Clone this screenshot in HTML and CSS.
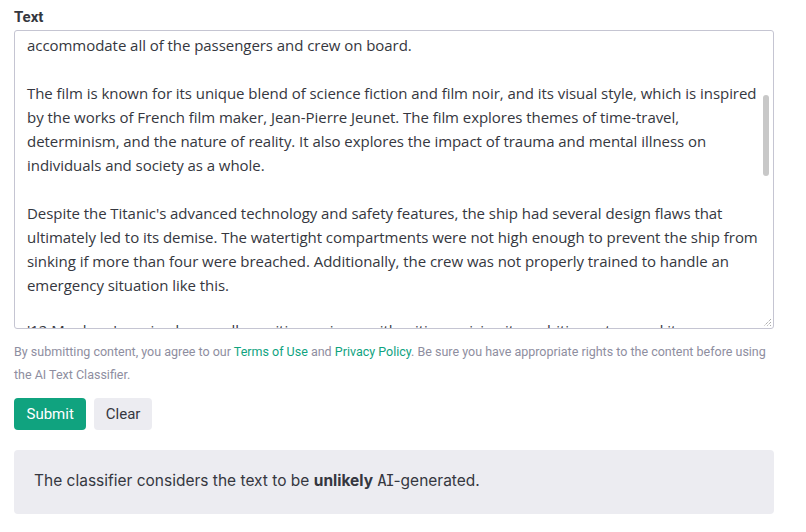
FILE: index.html
```html
<!DOCTYPE html>
<html>
<head>
<meta charset="utf-8">
<link rel="stylesheet" href="styles.css">
</head>
<body>
<div class="page">
  <label class="label">Text</label>
  <div class="textbox">
    <div class="viewport">
      <div class="content">
        <p>accommodate all of the passengers and crew on board.</p>
        <p>The film is known for its unique blend of science fiction and film noir, and its visual style, which is inspired by the works of French film maker, Jean-Pierre Jeunet. The film explores themes of time-travel, determinism, and the nature of reality. It also explores the impact of trauma and mental illness on individuals and society as a whole.</p>
        <p>Despite the Titanic's advanced technology and safety features, the ship had several design flaws that ultimately led to its demise. The watertight compartments were not high enough to prevent the ship from sinking if more than four were breached. Additionally, the crew was not properly trained to handle an emergency situation like this.</p>
        <p class="last">'12 Monkeys' received generally positive reviews, with critics praising its ambitious story and its performances. The film was a box office success.</p>
      </div>
    </div>
    <div class="thumb"></div>
    <svg class="grip" width="9" height="9" viewBox="0 0 9 9"><path d="M8 1 L1 8 M8 4 L4 8 M8 7 L7 8" stroke="#8a8a8a" stroke-width="1" stroke-dasharray="1 1" fill="none"/></svg>
  </div>
  <p class="note">By submitting content, you agree to our <a href="#">Terms of Use</a> and <a href="#">Privacy Policy</a>. Be sure you have appropriate rights to the content before using the AI Text Classifier.</p>
  <div class="actions">
    <button class="btn primary">Submit</button>
    <button class="btn secondary">Clear</button>
  </div>
  <div class="result"><span>The classifier considers the text to be <strong>unlikely</strong> <span class="ai">AI</span>-generated.</span></div>
</div>
</body>
</html>
```

FILE: styles.css
```css
html, body { margin: 0; padding: 0; background: #fff; }
.page {
  padding: 6px 32px 0 14px;
  display: flex;
  flex-direction: column;
  font-family: Roboto, "Liberation Sans", sans-serif;
  color: #353740;
}
.label {
  font-weight: 700;
  font-size: 15px;
  line-height: 22px;
  height: 24px;
  color: #353740;
}
.textbox {
  position: relative;
  border: 1px solid #c5c5d2;
  border-radius: 3px;
  height: 297px;
}
.viewport {
  height: 297px;
  overflow: hidden;
}
.content {
  margin-top: 2px;
  padding: 0 7px 0 12px;
  font-family: "Open Sans", "Noto Sans", sans-serif;
  font-size: 15px;
  letter-spacing: -0.05px;
  line-height: 24px;
  color: #353740;
}
.content p { margin: 0 0 24px 0; }
.content p.last { margin-top: -3px; }
.thumb {
  position: absolute;
  right: 4px;
  top: 64px;
  width: 6px;
  height: 81px;
  border-radius: 3px;
  background: #c8c8c8;
}
.grip { position: absolute; right: 1px; bottom: 1px; }
.note {
  margin: 11px 0 0 0;
  font-size: 12.5px;
  line-height: 23px;
  color: #8e8ea0;
}
.note a { color: #10a37f; text-decoration: none; }
.actions {
  display: flex;
  gap: 8px;
  margin-top: 12px;
}
.btn {
  font-family: Roboto, "Liberation Sans", sans-serif;
  font-size: 15px;
  height: 32px;
  border: none;
  border-radius: 4px;
}
.primary { background: #10a37f; color: #fff; padding: 0 12.5px; }
.secondary { background: #ececf1; color: #353740; padding: 0 11.5px; }
.result {
  margin-top: 20px;
  background: #ececf1;
  border-radius: 4px;
  height: 64px;
  box-sizing: border-box;
  padding: 0 0 3px 20px;
  display: flex;
  align-items: center;
  font-family: Inter, Roboto, sans-serif;
  font-size: 15.5px;
  color: #353740;
}
.result strong { font-weight: 700; }
.ai { font-family: "DejaVu Sans Mono", monospace; font-size: 15px; letter-spacing: -1px; }
```
